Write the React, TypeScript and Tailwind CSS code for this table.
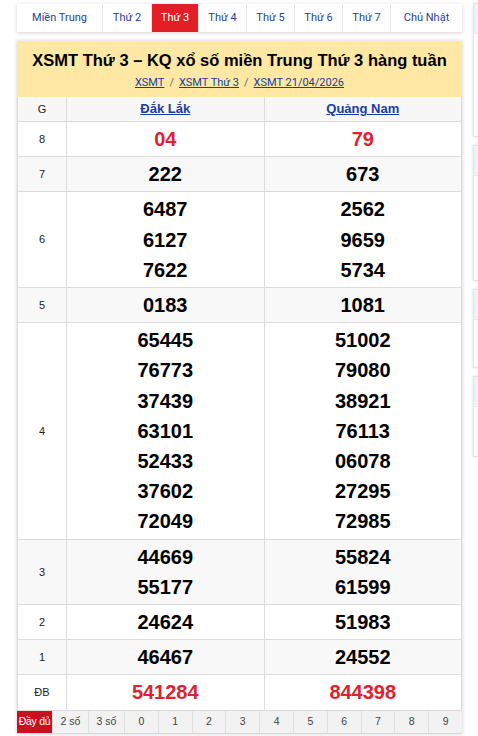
const days = [
  { label: 'Miền Trung', w: 'w-[85px]' },
  { label: 'Thứ 2', w: 'w-[49px]' },
  { label: 'Thứ 3', w: 'w-[47px]', active: true },
  { label: 'Thứ 4', w: 'w-[48px]' },
  { label: 'Thứ 5', w: 'w-[48px]' },
  { label: 'Thứ 6', w: 'w-[48px]' },
  { label: 'Thứ 7', w: 'w-[48px]' },
  { label: 'Chủ Nhật', w: 'w-[72px]' },
];

type Row = { g: string; a: string[]; b: string[]; red?: boolean; gray?: boolean };

const rows: Row[] = [
  { g: '8', a: ['04'], b: ['79'], red: true },
  { g: '7', a: ['222'], b: ['673'], gray: true },
  { g: '6', a: ['6487', '6127', '7622'], b: ['2562', '9659', '5734'] },
  { g: '5', a: ['0183'], b: ['1081'], gray: true },
  {
    g: '4',
    a: ['65445', '76773', '37439', '63101', '52433', '37602', '72049'],
    b: ['51002', '79080', '38921', '76113', '06078', '27295', '72985'],
  },
  { g: '3', a: ['44669', '55177'], b: ['55824', '61599'], gray: true },
  { g: '2', a: ['24624'], b: ['51983'] },
  { g: '1', a: ['46467'], b: ['24552'], gray: true },
  { g: 'ĐB', a: ['541284'], b: ['844398'], red: true },
];

const filters = ['2 số', '3 số', '0', '1', '2', '3', '4', '5', '6', '7', '8', '9'];

function Nums({ list, red }: { list: string[]; red?: boolean }) {
  return (
    <div className="flex flex-col items-center py-[2px]">
      {list.map((n, i) => (
        <span
          key={i}
          className={`text-[20px] leading-[30.2px] font-bold ${red ? 'text-[#e0212f]' : 'text-black'}`}
        >
          {n}
        </span>
      ))}
    </div>
  );
}

function SideBox({ h }: { h: string }) {
  return (
    <div className={`${h} w-[200px] shrink-0 border border-[#e3e3e3] shadow-[0_0_3px_rgba(0,0,0,0.12)] bg-white`}>
      <div className="h-[30px] bg-[#edf3fc] border-b border-[#e3e8f0]" />
    </div>
  );
}

export default function App() {
  return (
    <div className="w-[478px] h-[736px] overflow-hidden bg-white flex items-start font-['Roboto',sans-serif]">
      <div className="ml-[17px] w-[445px] shrink-0">
        <div className="mt-[4px] h-[28px] flex bg-white shadow-[0_1px_4px_rgba(0,0,0,0.18)]">
          {days.map((d, i) => (
            <div
              key={d.label}
              className={`${d.w} flex items-center justify-center text-[11px] ${
                i > 0 ? 'border-l border-[#e6e6e6]' : ''
              } ${d.active ? 'bg-[#e41e26] text-white' : 'text-[#2a3f93]'}`}
            >
              {d.label}
            </div>
          ))}
        </div>

        <div className="mt-[9px] shadow-[0_0_4px_rgba(0,0,0,0.2)]">
          <div className="h-[56px] bg-[#fee8a4] flex flex-col items-center pt-[8px]">
            <h1 className="text-[16.5px] leading-[22px] font-bold text-black whitespace-nowrap font-['Liberation_Sans',Arial,sans-serif]">
              XSMT Thứ 3 – KQ xổ số miền Trung Thứ 3 hàng tuần
            </h1>
            <div className="mt-[4px] text-[11px] leading-[16px] text-[#666] flex gap-[5px] whitespace-nowrap">
              <a className="underline text-[#1a3ca3]">XSMT</a>
              <span>/</span>
              <a className="underline text-[#1a3ca3]">XSMT Thứ 3</a>
              <span>/</span>
              <a className="underline text-[#1a3ca3]">XSMT 21/04/2026</a>
            </div>
          </div>

          <div className="font-['Liberation_Sans',Arial,sans-serif] border-x border-[#dcdcdc]">
            <div className="flex h-[25px] bg-[#f7f7f7] border-b border-[#dcdcdc]">
              <div className="w-[49px] flex items-center justify-center text-[11px] text-[#222] border-r border-[#dcdcdc]">
                G
              </div>
              <div className="flex-1 flex items-center justify-center border-r border-[#dcdcdc]">
                <a className="text-[13px] font-bold underline text-[#1a3ca3]">Đắk Lắk</a>
              </div>
              <div className="flex-1 flex items-center justify-center">
                <a className="text-[13px] font-bold underline text-[#1a3ca3]">Quảng Nam</a>
              </div>
            </div>
            {rows.map((r) => (
              <div
                key={r.g}
                className={`flex border-b border-[#dcdcdc] ${r.gray ? 'bg-[#f8f8f8]' : 'bg-white'}`}
              >
                <div className="w-[49px] flex items-center justify-center text-[11px] text-[#222] border-r border-[#dcdcdc]">
                  {r.g}
                </div>
                <div className="flex-1 border-r border-[#dcdcdc]">
                  <Nums list={r.a} red={r.red} />
                </div>
                <div className="flex-1">
                  <Nums list={r.b} red={r.red} />
                </div>
              </div>
            ))}
          </div>

          <div className="flex h-[23px] bg-[#f2f2f2] border-b border-[#dcdcdc] text-[10.5px] font-['Liberation_Sans',Arial,sans-serif]">
            <div className="w-[35px] flex items-center justify-center bg-[#c9101f] text-white whitespace-nowrap tracking-[-0.3px]">
              Đầy đủ
            </div>
            {filters.map((f, i) => (
              <div
                key={f}
                className={`${i < 2 ? 'w-[36px]' : 'flex-1'} flex items-center justify-center text-[#444] border-l border-[#e0e0e0]`}
              >
                {f}
              </div>
            ))}
          </div>
        </div>
      </div>

      <div className="ml-[11px] flex flex-col gap-[8px] pt-[3px] shrink-0">
        <SideBox h="h-[134px]" />
        <SideBox h="h-[136px]" />
        <SideBox h="h-[79px]" />
        <SideBox h="h-[81px]" />
      </div>
    </div>
  );
}
